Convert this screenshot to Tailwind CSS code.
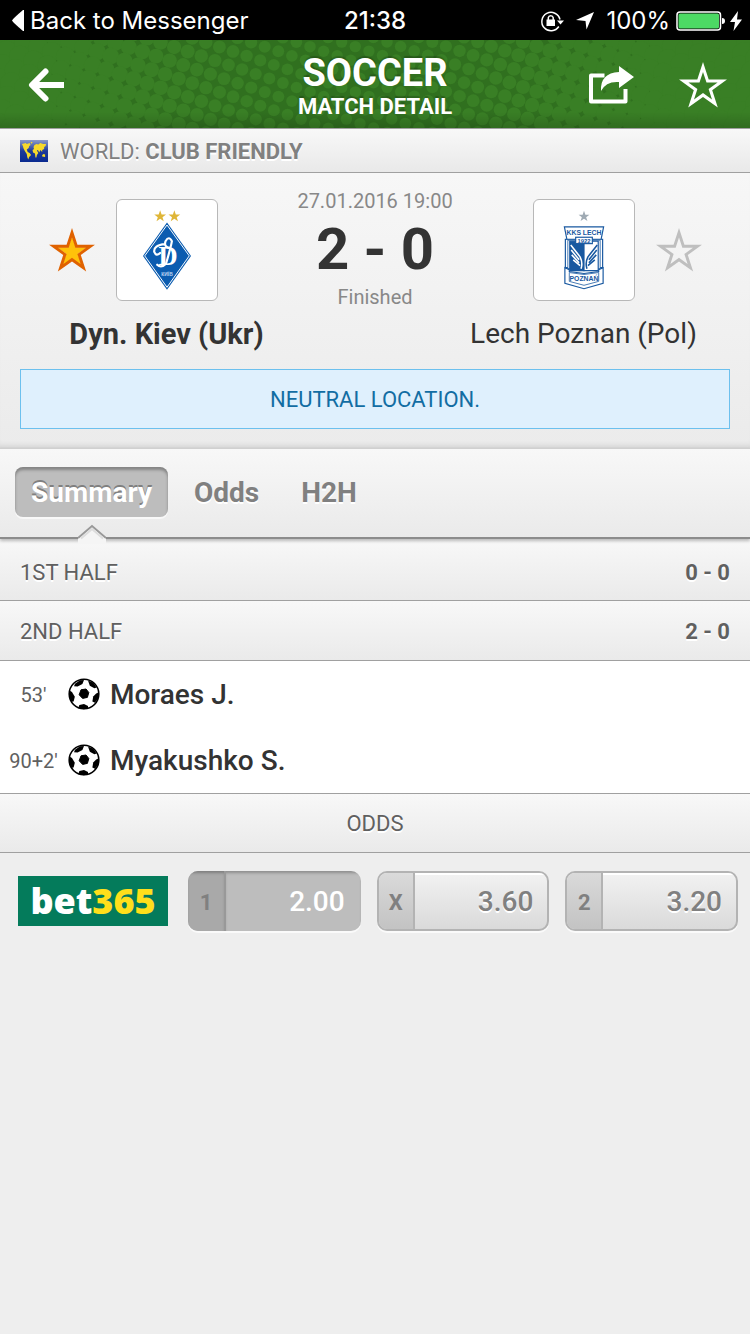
<!DOCTYPE html>
<html lang="en">

<head>
    <meta charset="UTF-8" />
    <meta name="viewport" content="width=device-width, initial-scale=1.0" />
    <title>Soccer - Match detail</title>

    <script src="https://cdn.jsdelivr.net/npm/@tailwindcss/browser@4"></script>
</head>

<body class="min-h-screen bg-[#eeeeee] font-[Roboto,sans-serif] text-[#333333]">

    <!-- Shared icons -->
    <svg class="hidden">
        <symbol id="star" viewBox="0 0 48 46">
            <path fill-rule="evenodd" fill="currentColor"
                d="M24 0L29.7 17.5H48L33.2 28.2L38.8 45.6L24 34.9L9.2 45.6L14.8 28.2L0 17.5H18.3ZM24 10L27.5 20.6H38.6L29.6 27.1L33 37.6L24 31.1L15 37.6L18.4 27.1L9.4 20.6H20.5Z" />
        </symbol>
        <symbol id="ball" viewBox="0 0 32 32">
            <circle cx="16" cy="16" r="14.8" fill="#fff" stroke="#000" stroke-width="1.6" />
            <path d="M13 11.8L18 11L20.8 14.5L19.4 19.4L14.6 20.4L11.2 16.8Z" stroke="#000" stroke-linejoin="round" />
            <path d="M7 5.8L12 2.2L16 2L14.4 6L9.6 8.4L6 8.2Z" />
            <path d="M20 2.6L25.4 4.8L28.6 9.4L26.4 10.2L21.8 7.8Z" />
            <path d="M30.6 14.6L30 20.6L27 24.8L24.4 23.4L25.2 18.6L28.2 15.4Z" />
            <path d="M10.2 30.2L11.4 27L16 26L20 28L20 30.6L15.6 31.2Z" />
            <path d="M1.4 12.6L4 14L6.8 18.8L5.6 23.6L3.6 23.8L1.4 19.6Z" />
        </symbol>
    </svg>

    <!-- Status bar -->
    <div class="grid h-10 grid-cols-[1fr_auto_1fr] items-center bg-black px-3 pt-px font-[Inter,sans-serif] text-2xl text-white">
        <a href="#" class="flex items-center gap-[6px]">
            <svg class="h-[22px] w-3" viewBox="0 0 12 22" fill="#fff"><path d="M0 10.5Q1 8.5 11 0H12V21H11Q1 12.5 0 10.5Z" /></svg>
            Back to Messenger
        </a>
        <time class="font-medium">21:38</time>
        <div class="-mr-1 flex items-center justify-end">
            <svg class="mr-3 h-6 w-6" viewBox="0 0 24 24" fill="none" stroke="#fff" stroke-width="1.5">
                <path d="M18.8 17.5A9.2 9.2 0 1 1 20 10.5" />
                <path d="M17 11.5H24L20.5 15.5Z" fill="#fff" stroke="none" />
                <rect x="6.500" y="10.5" width="8.5" height="6.5" fill="#fff" stroke="none" />
                <path d="M8.3 11.500V8.700A2.500 2.500 0 0 1 13.200 8.700V11.500" />
            </svg>
            <svg class="mr-3 h-[18px] w-[18px]" viewBox="0 0 18 18" fill="#fff"><path d="M18 0L10.5 17.500L9.500 9L0 8Z" /></svg>
            <span class="mr-[6px]">100%</span>
            <svg class="mr-1 h-5 w-[50px]" viewBox="0 0 50 20">
                <rect x="1" y="1" width="43.5" height="18" rx="3" fill="none" stroke="#fff" stroke-width="1.5" />
                <rect x="2.5" y="2.5" width="40.5" height="15" rx="1.5" fill="#4cd964" />
                <path d="M46 7Q49 7 49 10T46 13Z" fill="#fff" />
            </svg>
            <svg class="h-5 w-3" viewBox="0 0 12 20" fill="#fff"><path d="M8 0L0 11H5L3.5 20L12 8.5H7Z" /></svg>
        </div>
    </div>

    <!-- Header -->
    <header class="relative flex h-22 items-center justify-between overflow-hidden bg-[#397f25] px-6 pt-px text-white">
        <svg id="halftone" class="absolute inset-0 h-full w-full" viewBox="0 0 750 88" preserveAspectRatio="xMidYMin slice">
            <rect width="750" height="88" fill="#30701f" />
            <g fill="#397f25"></g>
        </svg>
        <div class="absolute inset-x-0 bottom-0 h-4 bg-linear-to-t from-black/15 to-transparent"></div>

        <button type="button" aria-label="Back" class="relative ml-1 h-9 w-9">
            <svg class="h-9 w-9" viewBox="0 0 36 36" fill="none" stroke="#fff"><path d="M4 18H36" stroke-width="6" /><path d="M17.5 4.500L4 18L17.500 31.500" stroke-width="6" stroke-linecap="round" stroke-linejoin="round" /></svg>
        </button>
        <h1 class="absolute inset-x-0 text-center font-bold [text-shadow:0_-2px_1px_rgba(0,0,0,0.2)]">
            <span class="mt-[6px] block text-[38px] leading-[38px]">SOCCER</span>
            <span class="block text-[22px] leading-[30px]">MATCH DETAIL</span>
        </h1>
        <div class="relative -mr-px flex items-center gap-11">
            <button type="button" aria-label="Share">
                <svg class="h-[38px] w-[46px]" viewBox="0 0 46 38">
                    <path d="M15.500 9.500H2V35.500H36.500V23" fill="none" stroke="#fff" stroke-width="4" stroke-linejoin="round" />
                    <path d="M30 0L45 11L30 22V16Q17 15 12 25Q11 7 30 6Z" fill="#fff" />
                </svg>
            </button>
            <button type="button" aria-label="Add to favourites"><svg class="h-[46px] w-12"><use href="#star" /></svg></button>
        </div>
    </header>

    <!-- Competition -->
    <div class="flex h-[45px] items-center gap-3 border-y border-[#a0a0a0] bg-linear-to-b from-[#f8f8f8] to-[#e9e9e9] px-5 text-[22px] text-[#808080] [text-shadow:0_2px_0_#fff]">
        <svg class="h-[22px] w-7" viewBox="0 0 29 22" preserveAspectRatio="none">
            <defs><linearGradient id="sea" x2="0" y2="1"><stop stop-color="#8d9bc9" /><stop offset=".5" stop-color="#1d3a9a" /><stop offset="1" stop-color="#0a2a90" /></linearGradient></defs>
            <rect width="29" height="22" fill="url(#sea)" />
            <path d="M2 4L4 3.500L6 3L7 4L10 3L11 5L9.500 6L9 8L7 9.500L8 12L10 13L11.500 15L9.500 17L8.500 19.500L7.500 17L7 14L5 11L3.500 8L3 6ZM14 7L15 5L17 4L19 4.500L21 3L24 4L27 4L26.500 6L25 7L25 9L23 10L23 12L21 10L20 12.500L18.500 10L17.500 10.500L19 13L17.500 15L17 17.500L16 17.500L15.500 13.500L13.500 12.500L13 10L14.500 9ZM23 15L24.500 14L26 14.500L26 17L23 16.500ZM11 2L13 2L12 4Z" fill="#f7d92b" />
        </svg>
        <p class="pt-px">WORLD: <b>CLUB FRIENDLY</b></p>
    </div>

    <!-- Match -->
    <main>
        <section class="bg-linear-to-b from-[#f7f7f7] to-[#ebebeb] px-5 pt-4 pb-[19px] shadow-[inset_0_-6px_6px_-5px_rgba(0,0,0,0.15)]">
            <div class="-mx-5 flex">
                <div class="flex-1 pt-[10px] text-center">
                    <div class="flex items-center justify-center gap-[21px]">
                        <button type="button" aria-label="Remove Dyn. Kiev from favourites" class="text-[#e06200]">
                            <svg class="h-11 w-[46px]" viewBox="0 0 48 46"><path d="M24 9L28 20H40L30 27L34 39L24 32L14 39L18 27L8 20H20Z" fill="#ffc20a" /><use href="#star" /></svg>
                        </button>
                        <div class="rounded-md border border-[#b8b8b8] bg-white">
                            <svg class="h-[100px] w-[100px]" viewBox="0 0 102 102">
                                <g fill="#dfb638"><path id="gold" d="M44 10.500L45.500 14.700H50L46.400 17.500L47.700 21.800L44 19.200L40.300 21.800L41.600 17.500L38 14.700H42.500Z" /><use href="#gold" x="14.500" /></g>
                                <path d="M51 23L75.500 57L51 91.500L26.500 57Z" fill="#0b5cb0" />
                                <path d="M51 25.500L73.700 57L51 89L28.300 57Z" fill="none" stroke="#fff" stroke-width="1" />
                                <text x="52" y="66" text-anchor="middle" font-family="Liberation Serif" font-size="27" font-weight="bold" fill="#fff">D</text>
                                <path d="M50 65Q55 48 56 42Q53 36 49.500 42Q47.500 48 54 49M49 45Q37 46 38 53Q40 58 44 54M50 65Q45 70 41 66" fill="none" stroke="#fff" stroke-width="2.200" stroke-linecap="round" />
                                <text x="51" y="78" text-anchor="middle" font-family="Liberation Sans" font-size="5" font-weight="bold" fill="#bcd6f0">КИЇВ</text>
                            </svg>
                        </div>
                        <div class="w-[46px]"></div>
                    </div>
                    <h2 class="mt-[15px] text-[29px] leading-9 font-bold">Dyn. Kiev (Ukr)</h2>
                </div>

                <div class="flex w-21 flex-col items-center whitespace-nowrap text-[20px] leading-6 text-[#888888]">
                    <time>27.01.2016 19:00</time>
                    <strong class="text-[58px] leading-[72px] text-[#333333]">2 - 0</strong>
                    <span>Finished</span>
                </div>

                <div class="flex-1 pt-[10px] text-center">
                    <div class="flex items-center justify-center gap-[21px]">
                        <div class="w-[46px]"></div>
                        <div class="rounded-md border border-[#b8b8b8] bg-white">
                            <svg class="h-[100px] w-[100px]" viewBox="0 0 102 102">
                                <path d="M51 11L52.400 15H56.500L53.200 17.500L54.500 21.500L51 19L47.500 21.500L48.800 17.500L45.500 15H49.600Z" fill="#9faab3" />
                                <g fill="#fff" stroke="#1858a0" stroke-width="1.200">
                                    <path d="M32 40H70V69H32Z" />
                                    <path d="M34.500 41H67.500V70H34.500Z" stroke-width=".8" />
                                    <path d="M36.500 42H51V72H36.500Z" fill="#1858a0" />
                                    <path d="M51 42H65.500V72H51Z" />
                                    <path d="M31 27.500H71L68.500 40H33.500Z" />
                                    <path d="M31.500 69L36 71V73L51 75L66 73V71L70.500 69V85L51 90.500L31.500 85Z" />
                                    <path d="M36 74L51 76L66 74V83L51 87L36 83Z" stroke-width=".8" />
                                    <rect x="42.500" y="38" width="17" height="6.500" />
                                </g>
                                <g fill="none" stroke-width="1.600">
                                    <path d="M37.500 46L47 58M38 51L46 61M38.500 56L46 64M40 61L47 67M47 58Q50 64 48 70" stroke="#fff" />
                                    <path d="M64.500 46L55 58M64 51L56 61M63.500 56L56 64M62 61L55 67M55 58Q52 64 54 70" stroke="#1858a0" />
                                </g>
                                <g font-family="Liberation Sans" font-weight="bold" fill="#1858a0" text-anchor="middle">
                                    <text x="51" y="36" font-size="7">KKS LECH</text>
                                    <text x="51" y="43.500" font-size="6">1922</text>
                                    <text x="51" y="83" font-size="7">POZNAŃ</text>
                                </g>
                            </svg>
                        </div>
                        <button type="button" aria-label="Add Lech Poznan to favourites" class="text-[#bfbfbf]">
                            <svg class="h-11 w-[46px]"><use href="#star" /></svg>
                        </button>
                    </div>
                    <h2 class="mt-[15px] text-[28px] leading-9">Lech Poznan (Pol)</h2>
                </div>
            </div>
            <p class="mt-[17px] flex h-15 items-center justify-center border border-[#6cc0ee] bg-[#dff0fd] pt-px text-[22px] text-[#126da3]">NEUTRAL LOCATION.</p>
        </section>

        <!-- Tabs -->
        <nav class="relative flex gap-[10px] border-t border-b-2 border-t-[#d0d0d0] border-b-[#8c8c8c] bg-linear-to-b from-[#f8f8f8] to-[#eaeaea] px-[15px] pt-[18px] pb-5 text-[28px] font-bold text-[#808080] shadow-[0_2px_3px_rgba(0,0,0,0.25)]">
            <button type="button" class="relative h-[50px] rounded-lg bg-[#bdbdbd] px-4 pt-[2px] text-white shadow-[inset_0_3px_3px_rgba(0,0,0,0.3),0_2px_0_#f8f8f8] [text-shadow:0_-2px_0_#808080]">
                Summary
                <svg class="absolute top-[57px] left-1/2 h-5 w-7 -translate-x-1/2" viewBox="0 0 28 20"><path d="M0 14L14 2L28 14V20H0Z" fill="#f5f5f5" /><path d="M0 14L14 2L28 14" fill="none" stroke="#999999" stroke-width="2" /><path d="M3 14.500L14 5L25 14.500" fill="none" stroke="#dddddd" stroke-width="2" /></svg>
            </button>
            <button type="button" class="px-4 pt-[2px] [text-shadow:0_2px_0_#fff]">Odds</button>
            <button type="button" class="px-4 pt-[2px] [text-shadow:0_2px_0_#fff]">H2H</button>
        </nav>

        <!-- Summary -->
        <section class="text-[22px] text-[#606060]">
            <h3 class="flex h-[62px] items-center justify-between border-b border-[#a0a0a0] bg-linear-to-b from-[#f8f8f8] to-[#eaeaea] px-5 pt-[6px] [text-shadow:0_2px_0_#fff]">1ST HALF <b>0 - 0</b></h3>
            <h3 class="flex h-15 items-center justify-between border-b border-[#a0a0a0] bg-linear-to-b from-[#f8f8f8] to-[#eaeaea] px-5 pt-[2px] [text-shadow:0_2px_0_#fff]">2ND HALF <b>2 - 0</b></h3>
            <ul class="bg-white text-[28px] font-medium text-[#333333]">
                <li class="flex h-[66px] items-center">
                    <span class="w-[67px] pt-[2px] text-center text-[20px] font-normal text-[#606060]">53'</span>
                    <svg class="mr-[10px] ml-px h-8 w-8"><use href="#ball" /></svg>
                    <span class="pt-[2px]">Moraes J.</span>
                </li>
                <li class="flex h-[66px] items-center">
                    <span class="w-[67px] pt-[2px] text-center text-[20px] font-normal text-[#606060]">90+2'</span>
                    <svg class="mr-[10px] ml-px h-8 w-8"><use href="#ball" /></svg>
                    <span class="pt-[2px]">Myakushko S.</span>
                </li>
            </ul>
        </section>

        <!-- Odds -->
        <section>
            <h3 class="flex h-15 items-center justify-center border-y border-[#a0a0a0] bg-linear-to-b from-[#f8f8f8] to-[#eaeaea] pt-px text-[22px] text-[#606060] [text-shadow:0_2px_0_#fff]">ODDS</h3>
            <div class="flex items-center gap-5 py-[18px] pr-3 pl-[18px] text-[28px] font-medium text-[#808080]">
                <a href="#" class="flex h-[50px] w-[150px] shrink-0 items-center justify-center bg-[#047b5b] font-[Open_Sans,sans-serif] text-[36px] font-extrabold text-white">bet<span class="text-[#ffdf1b]">365</span></a>
                <div class="grid flex-1 grid-cols-3 gap-4">
                    <button type="button" class="flex h-15 items-center overflow-hidden rounded-[10px] bg-[#bdbdbd] text-white shadow-[0_2px_0_#fafafa]">
                        <span class="flex h-full w-[38px] items-center justify-center border-r-2 border-[#999999] bg-[#a9a9a9] pt-[2px] text-[22px] font-bold text-[#808080] shadow-[inset_0_3px_3px_-1px_rgba(0,0,0,0.25)]">1</span>
                        <span class="flex h-full flex-1 items-center justify-end pt-[2px] pr-4 shadow-[inset_0_3px_3px_-1px_rgba(0,0,0,0.25)]">2.00</span>
                    </button>
                    <button type="button" class="flex h-15 items-center overflow-hidden rounded-[10px] border-2 border-[#b3b3b3] bg-linear-to-b from-[#f2f2f2] to-[#dadada] shadow-[0_2px_0_#fafafa]">
                        <span class="flex h-full w-9 items-center justify-center border-r-2 border-[#b3b3b3] bg-linear-to-b from-[#dadada] to-[#c3c3c3] pt-[2px] text-[22px] font-bold">X</span>
                        <span class="flex h-full flex-1 items-center justify-end pt-[2px] pr-[14px] shadow-[inset_0_2px_0_#fff] [text-shadow:0_2px_0_#fff]">3.60</span>
                    </button>
                    <button type="button" class="flex h-15 items-center overflow-hidden rounded-[10px] border-2 border-[#b3b3b3] bg-linear-to-b from-[#f2f2f2] to-[#dadada] shadow-[0_2px_0_#fafafa]">
                        <span class="flex h-full w-9 items-center justify-center border-r-2 border-[#b3b3b3] bg-linear-to-b from-[#dadada] to-[#c3c3c3] pt-[2px] text-[22px] font-bold">2</span>
                        <span class="flex h-full flex-1 items-center justify-end pt-[2px] pr-[14px] shadow-[inset_0_2px_0_#fff] [text-shadow:0_2px_0_#fff]">3.20</span>
                    </button>
                </div>
            </div>
        </section>
    </main>

    <script>
        // Halftone dots: tilted grid, dots grow until they merge near the edges
        const dots = document.querySelector('#halftone g');
        let circles = '';
        for (let i = -40; i < 40; i++) {
            for (let j = -20; j < 20; j++) {
                const x = 310 + i * 13.6 - j * 4.5;
                const y = 6.7 + i * 4.5 + j * 13.6;
                if (x < -15 || x > 765 || y < -15 || y > 103) continue;
                const d = Math.abs(x - 350) / 180;
                const r = 5.7 + 1.5 * d * d;
                circles += `<circle cx="${x}" cy="${y}" r="${r}" />`;
            }
        }
        dots.innerHTML = circles;
    </script>

</body>

</html>
